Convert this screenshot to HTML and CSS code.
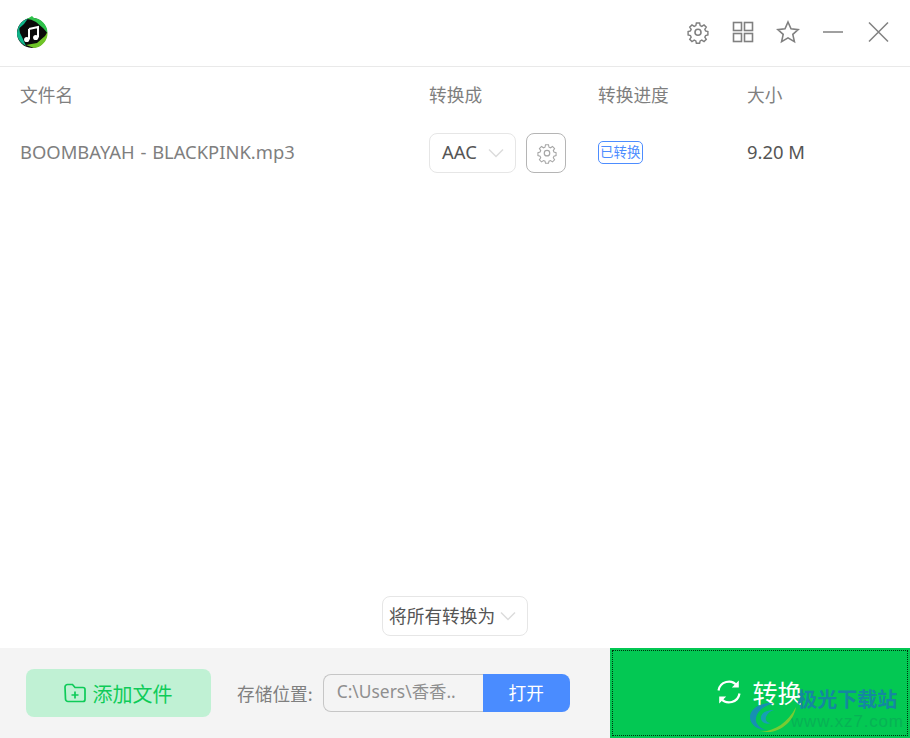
FILE: index.html
```html
<!DOCTYPE html>
<html lang="zh-CN">
<head>
<meta charset="utf-8">
<title>音频转换</title>
<link rel="stylesheet" href="styles.css">
</head>
<body>
<div class="app">
  <header class="titlebar">
    <svg class="logo" viewBox="0 0 32 32" width="32" height="32">
      <circle cx="16" cy="17" r="15" fill="#0a0a0a"/>
      <path d="M1.500 21A15.500 15.500 0 0 1 12 2.500L8 8 3.500 12Q3 17 6 21L10 30Q4 27 1.500 21Z" fill="#10b58a"/>
      <path d="M11 3 16 0 18 2A15 15 0 0 1 31.500 17L27 12 20 6Q15 3 11 3Z" fill="#2fc24b"/>
      <path d="M31.500 16A15 15 0 0 1 18 32L10 29 21 27 29 20Z" fill="#6fc427"/>
      <path d="M13 13 22 11V21.500M13 13V23.500" fill="none" stroke="#fff" stroke-width="2"/>
      <circle cx="10.700" cy="23.500" r="2.600" fill="#fff"/>
      <circle cx="19.700" cy="21.500" r="2.600" fill="#fff"/>
    </svg>
    <div class="winctl">
      <svg class="ico ico-gear" viewBox="0 0 24 24" width="24" height="24"><use href="#gear"/></svg>
      <svg class="ico ico-grid" viewBox="0 0 24 24" width="24" height="24">
        <rect x="2.500" y="2.500" width="8" height="8"/><rect x="13.500" y="2.500" width="8" height="8"/>
        <rect x="2.500" y="13.500" width="8" height="8"/><rect x="13.500" y="13.500" width="8" height="8"/>
      </svg>
      <svg class="ico ico-star" viewBox="0 0 24 24" width="24" height="24"><path d="M12 2 15 8.800 22.200 9.600 16.800 14.400 18.400 21.600 12 17.900 5.600 21.600 7.200 14.400 1.800 9.600 9 8.800Z"/></svg>
      <svg class="ico ico-min" viewBox="0 0 24 24" width="24" height="24"><path d="M2 12H22"/></svg>
      <svg class="ico ico-close" viewBox="0 0 24 24" width="24" height="24"><path d="M3 2.500 22 21.500M22 2.500 3 21.500"/></svg>
    </div>
  </header>

  <svg class="defs" width="0" height="0">
    <defs>
      <g id="gear">
        <path d="M10.200 2h3.600l.6 2.900 1.800.8 2.500-1.600 2.500 2.500-1.600 2.500.8 1.800 2.600.7v3.600l-2.600.7-.8 1.800 1.600 2.500-2.500 2.500-2.500-1.600-1.800.8-.6 2.600h-3.600l-.6-2.600-1.800-.8-2.500 1.600-2.500-2.500 1.600-2.500-.8-1.800-2.600-.7v-3.600l2.600-.7.8-1.800-1.600-2.500 2.500-2.500 2.500 1.600 1.800-.8z" transform="translate(1.200 1.200) scale(.9)"/>
        <circle cx="12" cy="12.200" r="3"/>
      </g>
    </defs>
  </svg>

  <main class="list">
    <div class="row head">
      <div class="c-name">文件名</div>
      <div class="c-fmt">转换成</div>
      <div class="c-prog">转换进度</div>
      <div class="c-size">大小</div>
    </div>
    <div class="row item">
      <div class="c-name fname">BOOMBAYAH - BLACKPINK.mp3</div>
      <div class="c-fmt fmt">
        <div class="select"><span>AAC</span><svg class="chev" viewBox="0 0 16 10" width="16" height="10"><path d="M1 1.500 8 8.500 15 1.500"/></svg></div>
        <button class="gearbtn"><svg class="ico ico-gear" viewBox="0 0 24 24" width="22" height="22"><use href="#gear"/></svg></button>
      </div>
      <div class="c-prog"><span class="badge">已转换</span></div>
      <div class="c-size size">9.20 M</div>
    </div>
  </main>

  <div class="allrow">
    <div class="allselect"><span>将所有转换为</span><svg class="chev" viewBox="0 0 16 10" width="16" height="10"><path d="M1 1.500 8 8.500 15 1.500"/></svg></div>
  </div>

  <footer class="footer">
    <button class="add">
      <svg class="addico" viewBox="0 0 24 24" width="24" height="24"><path d="M2 6a2.500 2.500 0 0 1 2.500-2.500h5l2.500 3h8a2 2 0 0 1 2 2v10a2 2 0 0 1-2 2h-15a2.500 2.500 0 0 1-2.500-2.500Z"/><path d="M12 10.500v7M8.500 14h7"/></svg>
      <span>添加文件</span>
    </button>
    <div class="saveloc">
      <span class="savelabel">存储位置:</span>
      <div class="pathgroup">
        <div class="path">C:\Users\香香..</div>
        <button class="open">打开</button>
      </div>
    </div>
    <button class="convert">
      <svg class="convico" viewBox="0 0 26 26" width="26" height="26"><path d="M2.500 11.500A10.500 10.500 0 0 1 21 6.500M23.500 14.500A10.500 10.500 0 0 1 5 19.500"/><path class="fillp" d="M22.800 1.500V8.500H15.800ZM3.200 24.500V17.500H10.200Z"/></svg>
      <span>转换</span>
      <div class="watermark">
        <svg class="wm-logo" viewBox="0 0 46 30" width="46" height="30">
          <path d="M24 1C10 0 0 7 0 15c0 8 8 13 16 13-7-2-11-7-10-12C7 9 14 4 24 1Z" fill="#1b86c4"/>
          <path d="M24 8C15 8 10 12 11 17c1 4 6 6 10 4-4 0-6-3-5-6 1-3 4-6 8-7Z" fill="#1b9ac4"/>
          <path d="M10 30C24 29 37 22 46 5 44 19 30 33 10 30Z" fill="#8ccc2e"/>
        </svg>
        <div class="wm-text"><div class="wm-cn">极光下载站</div><div class="wm-url">www.xz7.com</div></div>
      </div>
    </button>
  </footer>
</div>
</body>
</html>
```

FILE: styles.css
```css
* { box-sizing: border-box; }
html, body { margin: 0; padding: 0; background: #fff; }
body { font-family: "Noto Sans CJK SC", "Noto Sans", sans-serif; color: #7f7f7f; }
.defs { position: absolute; }
.app { width: 910px; height: 738px; display: flex; flex-direction: column; overflow: hidden; }

.titlebar { height: 67px; flex: none; display: flex; align-items: center; justify-content: space-between; padding: 0 20px 2px 16px; border-bottom: 1px solid #e9e9e9; }
.winctl { display: flex; align-items: center; gap: 21px; }
.ico { fill: none; stroke: #808080; stroke-width: 1.600; }
.ico-min, .ico-close { stroke-width: 1.500; }

.list { flex: 1; padding: 0 0 0 20px; }
.row { display: grid; grid-template-columns: 409px 169px 149px 1fr; align-items: center; }
.head { height: 57px; font-size: 17.700px; padding-bottom: 3px; }
.item { height: 58px; font-size: 18.400px; line-height: 26px; }
.fname { font-family: "Noto Sans", sans-serif; padding-bottom: 3px; word-spacing: 1px; }
.fmt { display: flex; gap: 10px; align-items: center; }
.select { width: 87px; height: 40px; border: 1.500px solid #e6e6e6; border-radius: 8px; display: flex; align-items: center; justify-content: space-between; padding: 0 11px 3px 12px; color: #555; font-family: "Noto Sans", sans-serif; }
.select .chev { margin-top: 3px; }
.chev { fill: none; stroke: #dcdcdc; stroke-width: 1.500; flex: none; }
.gearbtn { width: 40px; height: 40px; border: 1.500px solid #b5b5b5; border-radius: 8px; background: #fff; padding: 0 0 0 2px; display: flex; align-items: center; justify-content: center; }
.gearbtn .ico { stroke: #a6a6a6; stroke-width: 1.300; }
.badge { display: block; width: 45px; margin-bottom: 1px; border: 1.500px solid #4d8dff; border-radius: 5px; color: #4d8dff; font-size: 13.500px; line-height: 18px; height: 23px; padding: 0 0 0 1px; white-space: nowrap; }
.size { font-family: "Noto Sans", sans-serif; color: #555; padding-bottom: 3px; }

.allrow { flex: none; display: flex; justify-content: center; height: 52px; }
.allselect { width: 146px; height: 40px; border: 1.500px solid #e6e6e6; border-radius: 8px; display: flex; align-items: center; gap: 5px; padding: 0 0 2px 6px; font-size: 17.700px; color: #555; }
.allselect .chev { margin-top: 2px; }

.footer { flex: none; height: 90px; background: #f4f4f4; display: flex; align-items: center; }
.add { margin-left: 26px; width: 185px; height: 48px; border: 0; border-radius: 8px; background: #c0f1d4; color: #0ecb58; display: flex; align-items: center; justify-content: center; gap: 6px; font: 20px "Noto Sans CJK SC", sans-serif; padding: 0 2px 0 0; }
.addico { fill: none; stroke: #0ecb58; stroke-width: 1.700; }
.saveloc { margin-left: 26px; display: flex; align-items: center; gap: 10px; }
.savelabel { font-size: 17.700px; }
.pathgroup { display: flex; height: 38px; width: 247px; }
.path { flex: 1; border: 1.500px solid #c6c6c6; border-right: 0; border-radius: 8px 0 0 8px; font-size: 17.400px; color: #8f8f8f; padding-left: 13px; line-height: 33px; white-space: nowrap; overflow: hidden; font-family: "Noto Sans", "Noto Sans CJK SC", sans-serif; }
.open { width: 87px; flex: none; border: 0; border-radius: 0 8px 8px 0; background: #4a8cff; color: #fff; font: 17.700px "Noto Sans CJK SC", sans-serif; padding: 0 0 2px; }
.convert { position: relative; margin-left: auto; width: 300px; height: 90px; border: 3px solid #03c853; outline: 1px dotted #00300f; outline-offset: -3px; background: #03c853; color: #fff; font: 25px "Noto Sans CJK SC", sans-serif; display: flex; align-items: center; justify-content: center; gap: 10px; padding: 0 1px 2px 0; }
.convico { fill: none; stroke: #fff; stroke-width: 2.200; }
.convico .fillp { fill: #fff; stroke: none; }
.watermark { position: absolute; left: 137px; top: 36px; display: flex; align-items: flex-start; }
.wm-logo { margin-top: 15px; flex: none; opacity: .85; }
.wm-text { margin-left: -5px; }
.wm-cn { font-size: 20px; font-weight: 700; color: #1488a0; line-height: 24px; white-space: nowrap; }
.wm-url { font: 17px "Liberation Sans", sans-serif; color: #07b255; line-height: 20px; letter-spacing: .8px; margin-top: 1px; }
```
